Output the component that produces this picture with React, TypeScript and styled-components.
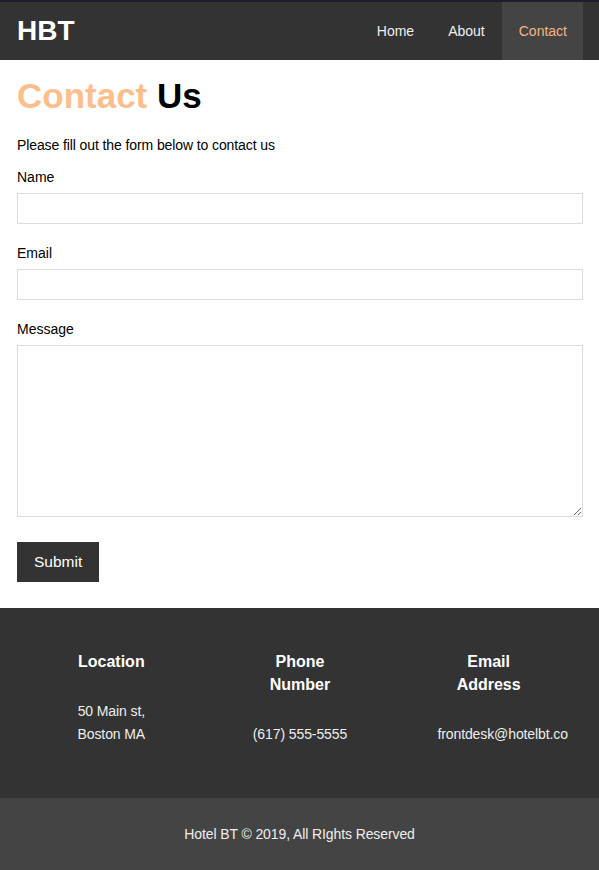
import styled, { createGlobalStyle } from "styled-components";

const GlobalStyle = createGlobalStyle`
  body {
    margin: 0;
    font-family: "Liberation Sans", Arial, sans-serif;
    background: #fff;
    color: #000;
  }
  * { box-sizing: border-box; }
`;

const Header = styled.header`
  display: flex;
  align-items: center;
  justify-content: space-between;
  height: 60px;
  border-top: 2px solid #1f1d2b;
  background: #333;
  padding: 0 16px 0 17px;
`;

const Brand = styled.div`
  color: #fff;
  font-size: 28px;
  font-weight: 700;
`;

const Nav = styled.nav`
  display: flex;
  height: 100%;
`;

const NavLink = styled.a<{ $active?: boolean }>`
  display: flex;
  align-items: center;
  padding: 0 17px;
  font-size: 14px;
  color: ${({ $active }) => ($active ? "#f5b585" : "#eee")};
  background: ${({ $active }) => ($active ? "#444" : "transparent")};
  text-decoration: none;

  &:last-child {
    padding-right: 16px;
  }
`;

const Main = styled.main`
  padding: 16px 16px 26px 17px;
`;

const Title = styled.h1`
  margin: 0;
  font-size: 35px;
  line-height: 40px;
  font-weight: 700;
`;

const Accent = styled.span`
  color: #fcbf8c;
`;

const Intro = styled.p`
  margin: 19px 0 12px;
  font-size: 14px;
  line-height: 20px;
  letter-spacing: -0.1px;
`;

const Form = styled.form`
  display: flex;
  flex-direction: column;
`;

const Label = styled.label`
  font-size: 14px;
  line-height: 20px;
  margin-bottom: 6px;
`;

const Input = styled.input`
  height: 31px;
  width: 100%;
  border: 1px solid #ddd;
  margin: 0 0 19px;
  padding: 0 8px;
  font: inherit;
`;

const TextArea = styled.textarea`
  height: 172px;
  width: 100%;
  border: 1px solid #ddd;
  margin: 0 0 25px;
  padding: 8px;
  font: inherit;
`;

const SubmitButton = styled.button`
  align-self: flex-start;
  height: 40px;
  padding: 0 17px;
  border: none;
  background: #333;
  color: #fff;
  font-family: "Liberation Sans", Arial, sans-serif;
  font-size: 15.5px;
`;

const Footer = styled.footer`
  display: grid;
  grid-template-columns: repeat(3, 1fr);
  padding: 42px 16px 52px 17px;
  background: #333;
  color: #fff;
`;

const Column = styled.div`
  text-align: center;
`;

const ColumnTitle = styled.h3`
  max-width: 90px;
  margin: 0 auto 27px;
  font-size: 16px;
  line-height: 23px;
  font-weight: 700;
`;

const ColumnText = styled.p<{ $shift?: number }>`
  margin: 0;
  padding-left: ${({ $shift }) => $shift ?? 0}px;
  font-size: 14px;
  line-height: 23px;
  letter-spacing: -0.1px;
  color: #eee;
`;

const BottomBar = styled.div`
  display: flex;
  align-items: center;
  justify-content: center;
  height: 72px;
  background: #444;
  color: #eee;
  font-size: 14px;
  letter-spacing: -0.1px;
`;

export default function App() {
  return (
    <>
      <GlobalStyle />
      <Header>
        <Brand>HBT</Brand>
        <Nav>
          <NavLink href="#">Home</NavLink>
          <NavLink href="#">About</NavLink>
          <NavLink href="#" $active>
            Contact
          </NavLink>
        </Nav>
      </Header>
      <Main>
        <Title>
          <Accent>Contact</Accent> Us
        </Title>
        <Intro>Please fill out the form below to contact us</Intro>
        <Form onSubmit={(e) => e.preventDefault()}>
          <Label htmlFor="name">Name</Label>
          <Input id="name" type="text" />
          <Label htmlFor="email">Email</Label>
          <Input id="email" type="email" />
          <Label htmlFor="message">Message</Label>
          <TextArea id="message" />
          <SubmitButton type="submit">Submit</SubmitButton>
        </Form>
      </Main>
      <Footer>
        <Column>
          <ColumnTitle>Location</ColumnTitle>
          <ColumnText>
            50 Main st,
            <br />
            Boston MA
          </ColumnText>
        </Column>
        <Column>
          <ColumnTitle>Phone Number</ColumnTitle>
          <ColumnText>(617) 555-5555</ColumnText>
        </Column>
        <Column>
          <ColumnTitle>Email Address</ColumnTitle>
          <ColumnText $shift={28}>frontdesk@hotelbt.co</ColumnText>
        </Column>
      </Footer>
      <BottomBar>Hotel BT © 2019, All RIghts Reserved</BottomBar>
    </>
  );
}
